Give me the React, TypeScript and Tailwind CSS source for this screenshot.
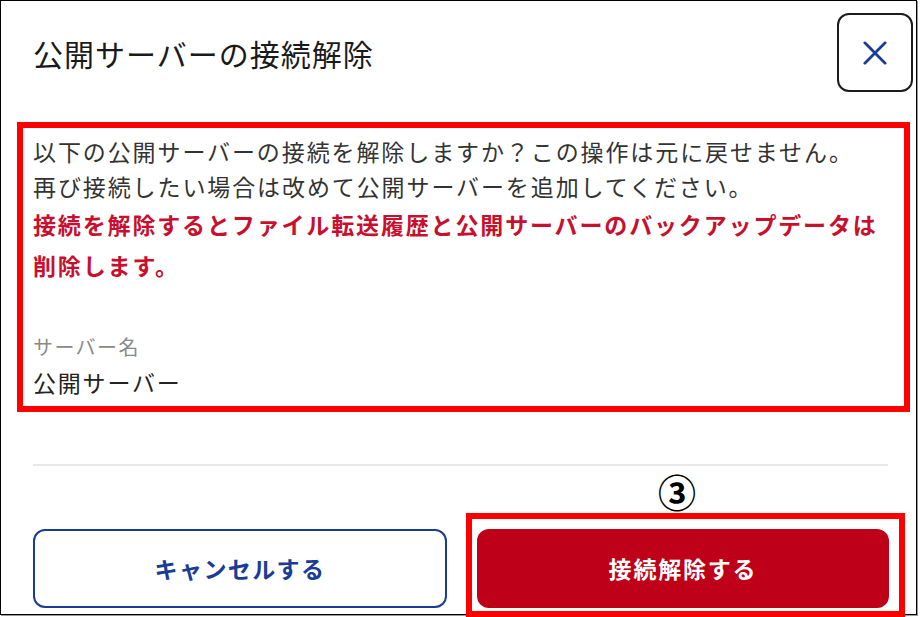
import React from "react";

const font = { fontFamily: '"Noto Sans CJK JP", "Noto Sans", sans-serif' };

export default function App() {
  return (
    <div className="relative w-[920px] h-[617px] bg-white overflow-hidden" style={font}>
      <div className="w-[917px] h-[615px] border border-black shadow-[1px_1px_0_#9a9a9a] flex flex-col">
        {/* header */}
        <div className="flex items-center justify-between pt-[12px] pl-[32px] pr-[3px]">
          <h1 className="text-[30px] leading-[40px] text-[#1a1a1a] tracking-[1px]">公開サーバーの接続解除</h1>
          <button className="w-[76px] h-[79px] rounded-[12px] border-2 border-[#1c1c1c] flex items-center justify-center">
            <svg width="24" height="24" viewBox="0 0 26 26" fill="none">
              <path d="M2 2 L24 24 M24 2 L2 24" stroke="#1a3c96" strokeWidth="3" strokeLinecap="round" />
            </svg>
          </button>
        </div>

        {/* body highlighted */}
        <div className="mt-[30px] ml-[16px] w-[893px] border-[6px] border-[#ff0000] pl-[10px] pt-[6px] pb-[7px] text-[#333333]">
          <p className="text-[23px] leading-[35px] tracking-[1.9px]">
            以下の公開サーバーの接続を解除しますか？この操作は元に戻せません。
            <br />
            再び接続したい場合は改めて公開サーバーを追加してください。
          </p>
          <p className="text-[23px] leading-[41px] tracking-[1.85px] font-bold text-[#c8102e]">
            接続を解除するとファイル転送履歴と公開サーバーのバックアップデータは
            <br />
            削除します。
          </p>
          <p className="mt-[47px] text-[20px] leading-[28px] tracking-[1.4px] text-[#8a8a8a]">サーバー名</p>
          <p className="mt-[4px] text-[23px] leading-[34px] tracking-[1.8px] text-[#222222]">公開サーバー</p>
        </div>

        {/* separator */}
        <div className="mt-[52px] ml-[32px] w-[855px] h-[2px] bg-[#e8e8e8]" />

        {/* buttons */}
        <div className="mt-[63px] ml-[32px] flex gap-[30px]">
          <button className="w-[414px] h-[79px] rounded-[12px] border-2 border-[#1a3c96] bg-white text-[#1a3c96] text-[23px] font-bold tracking-[1.4px] flex items-center justify-center">
            キャンセルする
          </button>
          <button className="w-[412px] h-[79px] rounded-[12px] bg-[#be0019] text-white text-[23px] font-bold tracking-[1.8px] flex items-center justify-center">
            接続解除する
          </button>
        </div>
      </div>

      {/* annotation */}
      <div className="absolute left-[658px] top-[469px] text-[38px] leading-[44px] font-bold text-black">③</div>
      <div className="absolute left-[466px] top-[513px] w-[439px] h-[104px] border-[6px] border-[#ff0000]" />
    </div>
  );
}
